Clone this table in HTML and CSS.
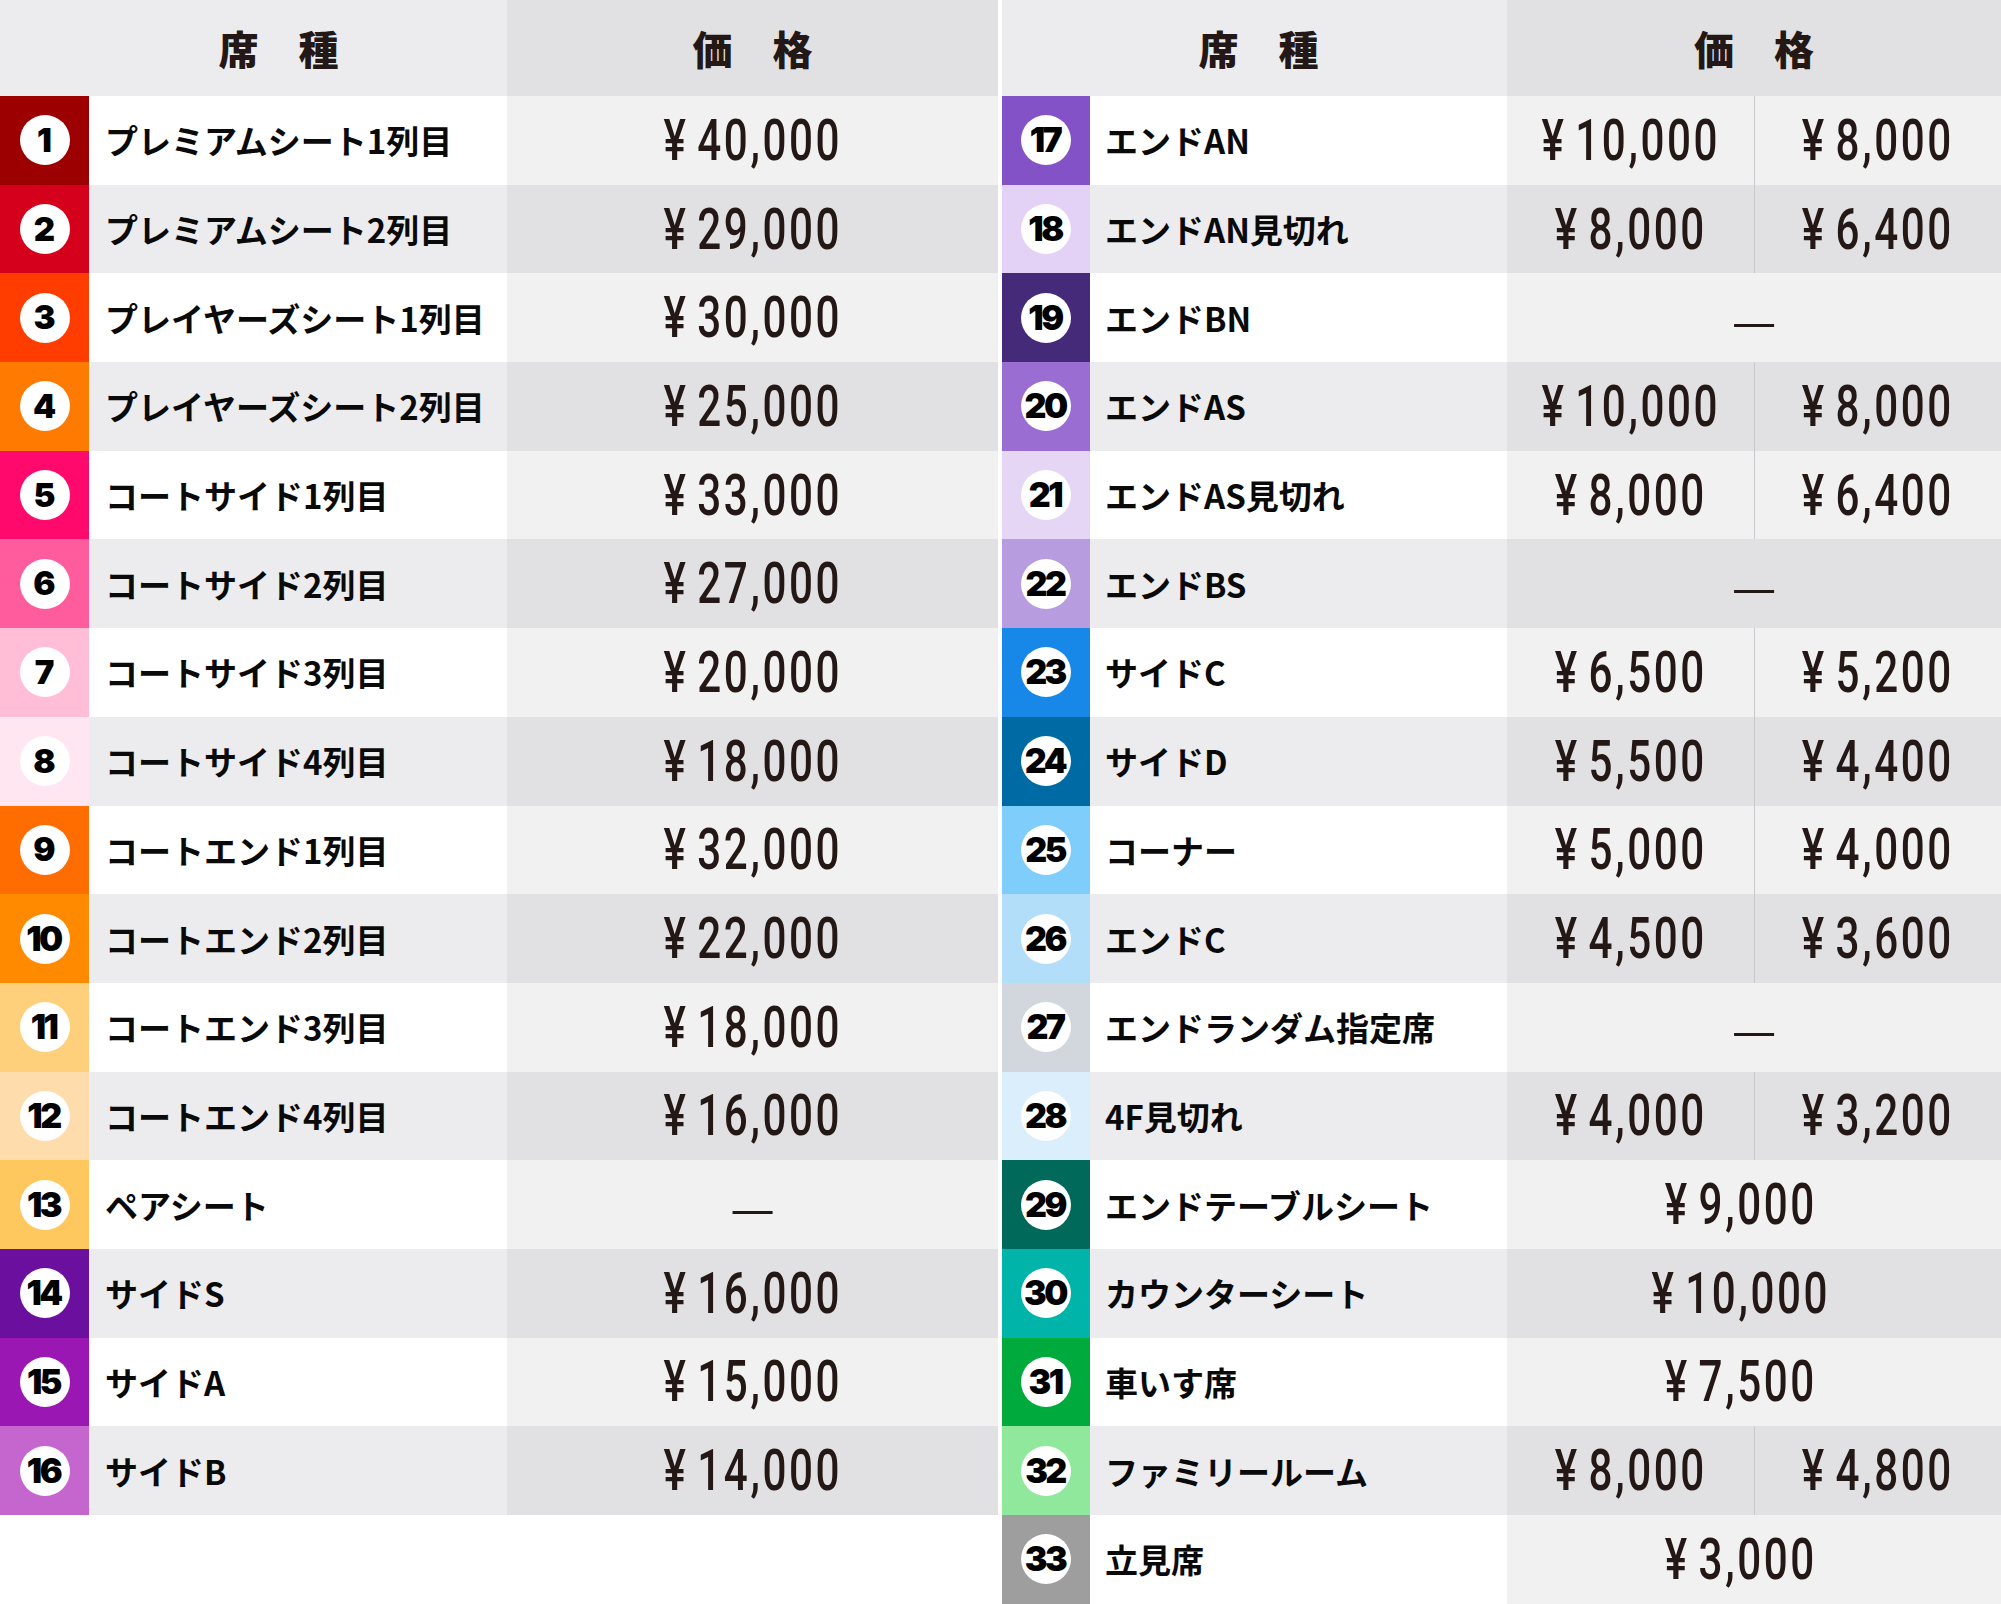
FILE: index.html
```html
<!DOCTYPE html>
<html lang="ja">
<head>
<meta charset="utf-8">
<title>席種・価格</title>
<link rel="stylesheet" href="styles.css">
</head>
<body>
<div class="page">
  <div class="table left">
    <div class="head"><div class="h-name">席　種</div><div class="h-price">価　格</div></div>
    <div class="rows">
      <div class="row"><div class="num c1"><span class="badge">1</span></div><div class="name">プレミアムシート1列目</div><div class="price"><span class="amt"><span class="yen">¥</span>40,000</span></div></div>
      <div class="row"><div class="num c2"><span class="badge">2</span></div><div class="name">プレミアムシート2列目</div><div class="price"><span class="amt"><span class="yen">¥</span>29,000</span></div></div>
      <div class="row"><div class="num c3"><span class="badge">3</span></div><div class="name">プレイヤーズシート1列目</div><div class="price"><span class="amt"><span class="yen">¥</span>30,000</span></div></div>
      <div class="row"><div class="num c4"><span class="badge">4</span></div><div class="name">プレイヤーズシート2列目</div><div class="price"><span class="amt"><span class="yen">¥</span>25,000</span></div></div>
      <div class="row"><div class="num c5"><span class="badge">5</span></div><div class="name">コートサイド1列目</div><div class="price"><span class="amt"><span class="yen">¥</span>33,000</span></div></div>
      <div class="row"><div class="num c6"><span class="badge">6</span></div><div class="name">コートサイド2列目</div><div class="price"><span class="amt"><span class="yen">¥</span>27,000</span></div></div>
      <div class="row"><div class="num c7"><span class="badge">7</span></div><div class="name">コートサイド3列目</div><div class="price"><span class="amt"><span class="yen">¥</span>20,000</span></div></div>
      <div class="row"><div class="num c8"><span class="badge">8</span></div><div class="name">コートサイド4列目</div><div class="price"><span class="amt"><span class="yen">¥</span>18,000</span></div></div>
      <div class="row"><div class="num c9"><span class="badge">9</span></div><div class="name">コートエンド1列目</div><div class="price"><span class="amt"><span class="yen">¥</span>32,000</span></div></div>
      <div class="row"><div class="num c10"><span class="badge two">10</span></div><div class="name">コートエンド2列目</div><div class="price"><span class="amt"><span class="yen">¥</span>22,000</span></div></div>
      <div class="row"><div class="num c11"><span class="badge two">11</span></div><div class="name">コートエンド3列目</div><div class="price"><span class="amt"><span class="yen">¥</span>18,000</span></div></div>
      <div class="row"><div class="num c12"><span class="badge two">12</span></div><div class="name">コートエンド4列目</div><div class="price"><span class="amt"><span class="yen">¥</span>16,000</span></div></div>
      <div class="row"><div class="num c13"><span class="badge two">13</span></div><div class="name">ペアシート</div><div class="price"><span class="dash">—</span></div></div>
      <div class="row"><div class="num c14"><span class="badge two">14</span></div><div class="name">サイドS</div><div class="price"><span class="amt"><span class="yen">¥</span>16,000</span></div></div>
      <div class="row"><div class="num c15"><span class="badge two">15</span></div><div class="name">サイドA</div><div class="price"><span class="amt"><span class="yen">¥</span>15,000</span></div></div>
      <div class="row"><div class="num c16"><span class="badge two">16</span></div><div class="name">サイドB</div><div class="price"><span class="amt"><span class="yen">¥</span>14,000</span></div></div>
    </div>
  </div>

  <div class="table right">
    <div class="head"><div class="h-name">席　種</div><div class="h-price">価　格</div></div>
    <div class="rows">
      <div class="row"><div class="num c17"><span class="badge two">17</span></div><div class="name">エンドAN</div><div class="price split"><div class="half"><span class="amt"><span class="yen">¥</span>10,000</span></div><div class="half"><span class="amt"><span class="yen">¥</span>8,000</span></div></div></div>
      <div class="row"><div class="num c18"><span class="badge two">18</span></div><div class="name">エンドAN見切れ</div><div class="price split"><div class="half"><span class="amt"><span class="yen">¥</span>8,000</span></div><div class="half"><span class="amt"><span class="yen">¥</span>6,400</span></div></div></div>
      <div class="row"><div class="num c19"><span class="badge two">19</span></div><div class="name">エンドBN</div><div class="price"><span class="dash">—</span></div></div>
      <div class="row"><div class="num c20"><span class="badge two">20</span></div><div class="name">エンドAS</div><div class="price split"><div class="half"><span class="amt"><span class="yen">¥</span>10,000</span></div><div class="half"><span class="amt"><span class="yen">¥</span>8,000</span></div></div></div>
      <div class="row"><div class="num c21"><span class="badge two">21</span></div><div class="name">エンドAS見切れ</div><div class="price split"><div class="half"><span class="amt"><span class="yen">¥</span>8,000</span></div><div class="half"><span class="amt"><span class="yen">¥</span>6,400</span></div></div></div>
      <div class="row"><div class="num c22"><span class="badge two">22</span></div><div class="name">エンドBS</div><div class="price"><span class="dash">—</span></div></div>
      <div class="row"><div class="num c23"><span class="badge two">23</span></div><div class="name">サイドC</div><div class="price split"><div class="half"><span class="amt"><span class="yen">¥</span>6,500</span></div><div class="half"><span class="amt"><span class="yen">¥</span>5,200</span></div></div></div>
      <div class="row"><div class="num c24"><span class="badge two">24</span></div><div class="name">サイドD</div><div class="price split"><div class="half"><span class="amt"><span class="yen">¥</span>5,500</span></div><div class="half"><span class="amt"><span class="yen">¥</span>4,400</span></div></div></div>
      <div class="row"><div class="num c25"><span class="badge two">25</span></div><div class="name">コーナー</div><div class="price split"><div class="half"><span class="amt"><span class="yen">¥</span>5,000</span></div><div class="half"><span class="amt"><span class="yen">¥</span>4,000</span></div></div></div>
      <div class="row"><div class="num c26"><span class="badge two">26</span></div><div class="name">エンドC</div><div class="price split"><div class="half"><span class="amt"><span class="yen">¥</span>4,500</span></div><div class="half"><span class="amt"><span class="yen">¥</span>3,600</span></div></div></div>
      <div class="row"><div class="num c27"><span class="badge two">27</span></div><div class="name">エンドランダム指定席</div><div class="price"><span class="dash">—</span></div></div>
      <div class="row"><div class="num c28"><span class="badge two">28</span></div><div class="name">4F見切れ</div><div class="price split"><div class="half"><span class="amt"><span class="yen">¥</span>4,000</span></div><div class="half"><span class="amt"><span class="yen">¥</span>3,200</span></div></div></div>
      <div class="row"><div class="num c29"><span class="badge two">29</span></div><div class="name">エンドテーブルシート</div><div class="price single"><span class="amt"><span class="yen">¥</span>9,000</span></div></div>
      <div class="row"><div class="num c30"><span class="badge two">30</span></div><div class="name">カウンターシート</div><div class="price single"><span class="amt"><span class="yen">¥</span>10,000</span></div></div>
      <div class="row"><div class="num c31"><span class="badge two">31</span></div><div class="name">車いす席</div><div class="price single"><span class="amt"><span class="yen">¥</span>7,500</span></div></div>
      <div class="row"><div class="num c32"><span class="badge two">32</span></div><div class="name">ファミリールーム</div><div class="price split"><div class="half"><span class="amt"><span class="yen">¥</span>8,000</span></div><div class="half"><span class="amt"><span class="yen">¥</span>4,800</span></div></div></div>
      <div class="row"><div class="num c33"><span class="badge two">33</span></div><div class="name">立見席</div><div class="price single"><span class="amt"><span class="yen">¥</span>3,000</span></div></div>
    </div>
  </div>
</div>
</body>
</html>
```

FILE: styles.css
```css
html, body {
  margin: 0;
  padding: 0;
  background: #ffffff;
}

.page {
  width: 2001px;
  height: 1604px;
  display: flex;
  align-items: flex-start;
  gap: 4px;
  font-family: "Noto Sans CJK JP", "Noto Sans", sans-serif;
}

.table.left { width: 998px; }
.table.right { width: 999px; }

.head {
  height: 96px;
  display: grid;
  grid-template-columns: 507px 1fr;
  color: #231815;
  font-family: "Noto Sans CJK JP", sans-serif;
  font-weight: 900;
  font-size: 40px;
}

.right .head { grid-template-columns: 505px 1fr; }

.h-name, .h-price {
  display: flex;
  align-items: center;
  justify-content: center;
  line-height: 1;
}

.h-name { background: #ececee; }
.left .h-name { padding-left: 50px; }
.right .h-name { padding-left: 8px; }
.h-price { background: #e1e1e3; }

.row {
  height: 88.7px;
  display: grid;
  grid-template-columns: 89px 418px 1fr;
}

.right .row { grid-template-columns: 88px 417px 1fr; }

.row:nth-child(odd) .name { background: #ffffff; }
.row:nth-child(odd) .price { background: #f1f1f1; }
.row:nth-child(even) .name { background: #ececee; }
.row:nth-child(even) .price { background: #e1e1e3; }

.num {
  display: flex;
  align-items: center;
  justify-content: center;
}

.badge {
  width: 50px;
  height: 50px;
  border-radius: 50%;
  background: #ffffff;
  color: #000000;
  display: flex;
  align-items: center;
  justify-content: center;
  font-family: "Inter", "Roboto", sans-serif;
  font-weight: 900;
  font-size: 33px;
  line-height: 1;
}

.badge.two {
  font-size: 34px;
  letter-spacing: -2.5px;
  padding-right: 2px;
  box-sizing: border-box;
}

.name {
  display: flex;
  align-items: center;
  padding-left: 16px;
  font-family: "Noto Sans CJK JP", sans-serif;
  font-weight: 700;
  font-size: 33px;
  color: #0a0a0a;
  white-space: nowrap;
}

.right .name { padding-left: 15px; }

.price {
  display: flex;
  align-items: center;
  justify-content: center;
}

.price.single { padding-right: 26px; }

.price.split {
  display: grid;
  grid-template-columns: 1fr 1fr;
}

.half {
  display: flex;
  align-items: center;
  justify-content: center;
  height: 100%;
}

.half + .half { border-left: 1px solid #c9c9cb; }

.amt {
  display: inline-block;
  font-family: "Roboto", "Liberation Sans", sans-serif;
  font-weight: 500;
  font-size: 57px;
  line-height: 1;
  letter-spacing: 3.5px;
  color: #231815;
  transform: scaleX(0.74);
  white-space: nowrap;
}

.yen { margin-right: 12px; }

.dash {
  font-family: "Noto Sans CJK JP", sans-serif;
  font-weight: 400;
  font-size: 50px;
  line-height: 1;
  color: #231815;
}

.c1 { background: #9c0000; }
.c2 { background: #d5001c; }
.c3 { background: #ff3d00; }
.c4 { background: #ff7a00; }
.c5 { background: #ff0a6c; }
.c6 { background: #ff5c9d; }
.c7 { background: #ffbdd6; }
.c8 { background: #ffe6f0; }
.c9 { background: #ff6c00; }
.c10 { background: #ff8a00; }
.c11 { background: #ffd07c; }
.c12 { background: #ffdcab; }
.c13 { background: #ffc85e; }
.c14 { background: #6b0f9e; }
.c15 { background: #9a17b3; }
.c16 { background: #c566cf; }
.c17 { background: #8452c7; }
.c18 { background: #e3d2f6; }
.c19 { background: #462a7a; }
.c20 { background: #9a6dd3; }
.c21 { background: #e6d6f6; }
.c22 { background: #b79ce0; }
.c23 { background: #1888e8; }
.c24 { background: #006aa4; }
.c25 { background: #7fcdfa; }
.c26 { background: #b2defa; }
.c27 { background: #d1d7dd; }
.c28 { background: #dbeefc; }
.c29 { background: #00695a; }
.c30 { background: #00b4aa; }
.c31 { background: #00aa3c; }
.c32 { background: #90e89c; }
.c33 { background: #9e9e9e; }
```
